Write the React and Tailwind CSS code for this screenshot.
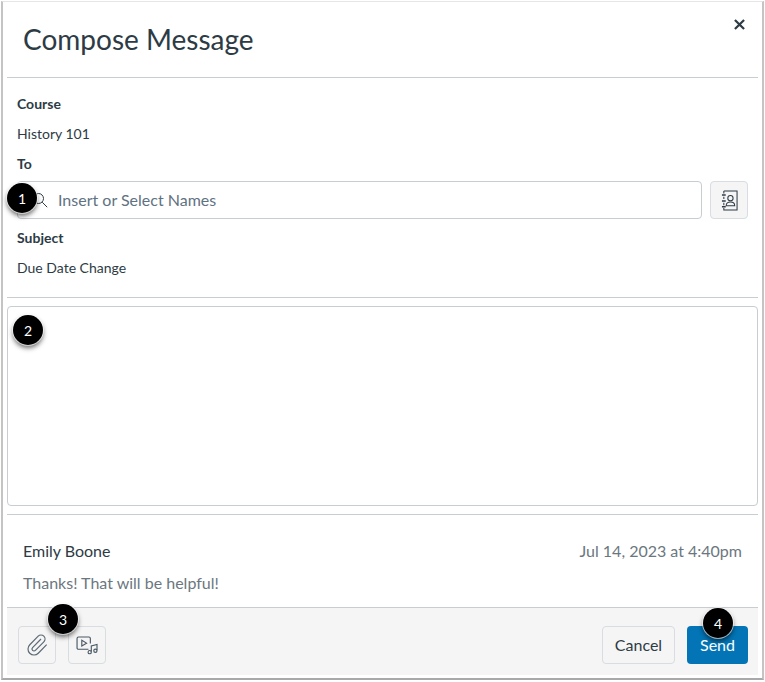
import React from "react";

const Badge = ({ n, className }) => (
  <div
    className={`absolute flex h-[30px] w-[30px] items-center justify-center rounded-full bg-black text-[14px] text-white shadow-[0_3px_5px_rgba(0,0,0,0.6)] ring-1 ring-white/60 ${className}`}
  >
    {n}
  </div>
);

const Field = ({ label, value }) => (
  <>
    <div className="h-[30px] text-[14px] font-bold leading-[30px] text-[#2d3b45]">{label}</div>
    {value && <div className="h-[30px] text-[14px] leading-[30px] text-[#2d3b45]">{value}</div>}
  </>
);

const IconButton = ({ children }) => (
  <button className="flex h-[38px] w-[38px] items-center justify-center rounded-[4px] border border-[#d7dde1] bg-[#f5f5f5] text-[#2d3b45]">
    {children}
  </button>
);

const App = () => {
  return (
    <div className="h-[682px] w-[765px] bg-white pl-[1px] pt-[1px] font-['Lato','Liberation_Sans',sans-serif]">
      <div className="relative h-[679px] w-[763px] border-b-2 border-l-2 border-r-2 border-t border-b-[#a9a9a9] border-l-[#c4c4c4] border-r-[#c4c4c4] border-t-[#e6e6e6] px-[4px]">
        <div className="flex h-[76px] items-center justify-between border-b border-[#c7cdd1] pb-[2px] pl-[16px] pr-[13px]">
          <h1 className="text-[28px] leading-none text-[#2d3b45]">Compose Message</h1>
          <svg viewBox="0 0 12 12" className="mb-[28px] h-[11px] w-[11px] text-[#2d3b45]" fill="none" stroke="currentColor" strokeWidth="2.4">
            <path d="M1 1l10 10M11 1L1 11" />
          </svg>
        </div>

        <div className="h-[220px] border-b border-[#c7cdd1] px-[10px] pt-[11px]">
          <Field label="Course" value="History 101" />
          <Field label="To" />
          <div className="mt-[2px] flex gap-[8px]">
            <div className="flex h-[38px] w-[685px] items-center rounded-[4px] border border-[#c7cdd1] bg-white pl-[14px]">
              <svg viewBox="0 0 16 16" className="h-[16px] w-[16px] text-[#2d3b45]" fill="none" stroke="currentColor" strokeWidth="1">
                <circle cx="6.5" cy="6.5" r="5" />
                <path d="M10.2 10.2l5 5" />
              </svg>
              <span className="ml-[10px] text-[16px] text-[#5f7282]">Insert or Select Names</span>
            </div>
            <IconButton>
              <svg viewBox="0 0 18 22" className="h-[21px] w-[17px]" fill="none" stroke="currentColor" strokeWidth="1.1">
                <path d="M3 1h14v20H3v-2M3 16v-2.500M3 9.500V7M3 3.500V1" />
                <path d="M1 5.200h4M1 11.500h4M1 17.700h4" strokeWidth="1.6" />
                <circle cx="10" cy="8.500" r="2.800" />
                <path d="M5.500 16.500c0-2.400 1.800-3.900 4.500-3.900s4.500 1.500 4.500 3.900z" />
              </svg>
            </IconButton>
          </div>
          <div className="mt-[4px]">
            <Field label="Subject" value="Due Date Change" />
          </div>
        </div>

        <div className="border-b border-[#c7cdd1] py-[8px]">
          <div className="h-[200px] rounded-[4px] border border-[#c7cdd1] bg-white" />
        </div>

        <div className="h-[92px] px-[16px] pt-[24px] text-[16px]">
          <div className="flex items-center justify-between leading-[24px]">
            <span className="text-[#2d3b45]">Emily Boone</span>
            <span className="text-[#6b7780]">Jul 14, 2023 at 4:40pm</span>
          </div>
          <div className="mt-[8px] leading-[24px] text-[#6b7780]">Thanks! That will be helpful!</div>
        </div>

        <div className="flex h-[68px] items-center justify-between border-t border-[#c7cdd1] bg-[#f5f5f5] pl-[11px] pr-[10px] pt-[7px]">
          <div className="flex gap-[12px]">
            <IconButton>
              <svg viewBox="0 0 24 24" className="h-[24px] w-[24px] text-[#5b6a75]" fill="none" stroke="currentColor" strokeWidth="1.2">
                <path d="m16 6-8.414 8.586a2 2 0 0 0 2.829 2.829l8.414-8.586a4 4 0 1 0-5.657-5.657l-8.379 8.551a6 6 0 1 0 8.485 8.485l8.379-8.551" />
              </svg>
            </IconButton>
            <IconButton>
              <svg viewBox="0 0 24 20" className="h-[19px] w-[23px] text-[#4a5a66]" fill="none" stroke="currentColor" strokeWidth="1.2">
                <path d="M13 14H2.500A1.500 1.500 0 0 1 1 12.500v-10A1.500 1.500 0 0 1 2.500 1h11A1.500 1.500 0 0 1 15 2.500V8" />
                <path d="M6 4.500l5 3-5 3z" />
                <path d="M16 16.500V10.500l6-1.500v6" />
                <circle cx="14.300" cy="17" r="1.700" />
                <circle cx="20.300" cy="15.500" r="1.700" />
              </svg>
            </IconButton>
          </div>
          <div className="flex gap-[12px]">
            <button className="h-[38px] w-[73px] rounded-[4px] border border-[#d7dde1] bg-[#f5f5f5] text-[16px] text-[#2d3b45]">Cancel</button>
            <button className="h-[38px] w-[61px] rounded-[4px] bg-[#0374b5] text-[16px] text-white">Send</button>
          </div>
        </div>

        <Badge n="1" className="left-[4px] top-[181px]" />
        <Badge n="2" className="left-[10px] top-[313px]" />
        <Badge n="3" className="left-[45px] top-[602px]" />
        <Badge n="4" className="left-[700px] top-[606px]" />
      </div>
    </div>
  );
};

export default App;
